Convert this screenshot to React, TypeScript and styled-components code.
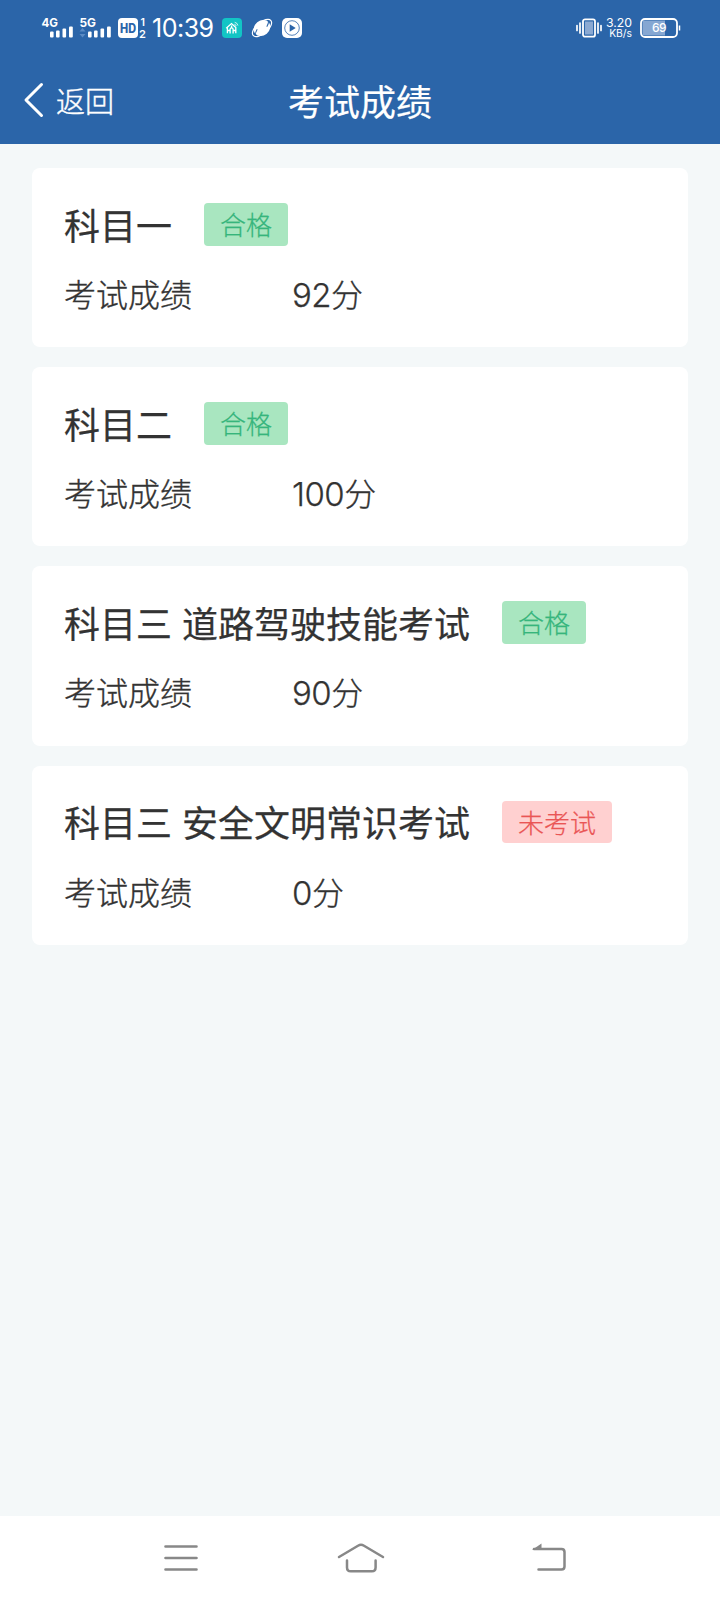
import React from 'react';
import styled, { createGlobalStyle } from 'styled-components';

const GlobalStyle = createGlobalStyle`
  * { box-sizing: border-box; }
  body {
    margin: 0;
    background: #f4f8f9;
    font-family: 'Noto Sans CJK SC', sans-serif;
    color: #333;
  }
`;

const Screen = styled.div`
  display: flex;
  flex-direction: column;
  width: 720px;
  height: 1600px;
  background: #f4f8f9;
`;

const StatusBar = styled.div`
  display: flex;
  align-items: center;
  justify-content: space-between;
  height: 56px;
  padding: 0 39px 0 41px;
  background: #2b65a9;
  color: #fff;
  font-family: Inter, sans-serif;
`;

const StatusGroup = styled.div`
  display: flex;
  align-items: center;
`;

const Clock = styled.span`
  width: 63px;
  margin: 0 7px 0 6px;
  font-size: 25px;
  line-height: 30px;
  letter-spacing: -0.5px;
  white-space: nowrap;
`;

const StatusIcon = styled.svg<{ $gap?: number }>`
  display: block;
  flex: none;
  margin-left: ${({ $gap = 0 }) => $gap}px;
  overflow: visible;
`;

const NetSpeed = styled.div`
  display: flex;
  flex-direction: column;
  align-items: flex-end;
  width: 26px;
  margin: 0 8px 0 4px;
`;

const SpeedText = styled.span<{ $size: number }>`
  font-size: ${({ $size }) => $size}px;
  line-height: 11px;
  white-space: nowrap;
`;

const NavBar = styled.header`
  display: grid;
  grid-template-columns: 1fr auto 1fr;
  align-items: center;
  height: 88px;
  padding: 0 24px;
  background: #2b65a9;
  color: #fff;
`;

const BackButton = styled.div`
  display: flex;
  align-items: center;
  gap: 12px;
  font-size: 29px;
  font-weight: 300;
  line-height: 40px;
`;

const BackLabel = styled.span`
  -webkit-text-stroke: 0.4px currentColor;
`;

const PageTitle = styled.h1`
  margin: 0;
  font-size: 36px;
  line-height: 48px;
  font-weight: 400;
  -webkit-text-stroke: 0.2px #fff;
`;

const ScoreList = styled.main`
  flex: 1;
  display: flex;
  flex-direction: column;
  gap: 20px;
  padding: 24px 32px;
`;

const Card = styled.section`
  height: 179.2px;
  padding: 34.8px 32px 0;
  border-radius: 8px;
  background: #fff;
`;

const CardHead = styled.div`
  display: flex;
  align-items: center;
  gap: 32px;
  height: 43px;
`;

const Subject = styled.h2`
  margin: 0;
  font-size: 36px;
  line-height: 43px;
  font-weight: 400;
  word-spacing: 2px;
  white-space: nowrap;
  -webkit-text-stroke: 0.25px #333;
`;

const Tag = styled.span<{ $passed: boolean }>`
  height: 42.5px;
  padding: 0 16px;
  border-radius: 4px;
  font-size: 26px;
  font-weight: 300;
  line-height: 42px;
  color: ${({ $passed }) => ($passed ? '#36b57c' : '#ea5555')};
  background: ${({ $passed }) => ($passed ? '#a9e6c0' : '#ffd0d0')};
  -webkit-text-stroke: 0.25px currentColor;
`;

const ScoreRow = styled.div`
  display: flex;
  align-items: baseline;
  margin-top: 25.2px;
  font-size: 32px;
  font-weight: 300;
  line-height: 44px;
`;

const ScoreLabel = styled.span`
  width: 228px;
  -webkit-text-stroke: 0.35px currentColor;
`;

const ScoreUnit = styled.span`
  -webkit-text-stroke: 0.35px currentColor;
`;

const ScoreNumber = styled.span`
  font-family: Inter, sans-serif;
  font-size: 33px;
  letter-spacing: -0.5px;
  -webkit-text-stroke: 0.25px currentColor;
`;

const SystemNav = styled.nav`
  display: grid;
  grid-template-columns: repeat(3, 1fr);
  justify-items: center;
  align-items: center;
  height: 84px;
  padding: 0 84px 0 86px;
  background: #fff;
`;

const scores = [
  { subject: '科目一', status: '合格', passed: true, score: 92 },
  { subject: '科目二', status: '合格', passed: true, score: 100 },
  { subject: '科目三 道路驾驶技能考试', status: '合格', passed: true, score: 90 },
  { subject: '科目三 安全文明常识考试', status: '未考试', passed: false, score: 0 },
];

function Signal({ label, data, gap }: { label: string; data?: boolean; gap?: number }) {
  return (
    <StatusIcon $gap={gap} width="33" height="24" viewBox="0 0 33 24" fill="#fff">
      <text x="0.5" y="10.5" fontSize="12" fontWeight="700" textLength="16.5" lengthAdjust="spacingAndGlyphs">{label}</text>
      {data && <path d="M0.5 15.5 3.5 12l3 3.5zM0.5 18l3 3.5 3-3.5z" fill="#5b8bc4" />}
      <rect x="9" y="15.5" width="3.6" height="6" rx="1" />
      <rect x="15" y="14.5" width="3.6" height="7" rx="1" />
      <rect x="21.5" y="12.5" width="3.6" height="9" rx="1" />
      <rect x="28" y="10.5" width="3.8" height="11" rx="1" />
    </StatusIcon>
  );
}

export default function App() {
  return (
    <Screen>
      <GlobalStyle />
      <StatusBar>
        <StatusGroup>
          <Signal label="4G" />
          <Signal label="5G" data gap={5} />
          <StatusIcon $gap={6} width="28" height="24" viewBox="0 0 28 24" fill="#fff">
            <rect x="0" y="2" width="20" height="20" rx="4" />
            <text x="2" y="16.5" fontSize="12.5" fontWeight="800" fill="#2b65a9" textLength="16" lengthAdjust="spacingAndGlyphs">HD</text>
            <text x="22.5" y="10" fontSize="10.5" fontWeight="600">1</text>
            <text x="21" y="21.5" fontSize="11" fontWeight="600">2</text>
          </StatusIcon>
          <Clock>10:39</Clock>
          <StatusIcon width="20" height="20" viewBox="0 0 20 20" fill="none">
            <rect width="20" height="20" rx="4" fill="#12c5c5" />
            <path d="M4.2 10.2 9.5 5.5l4.6 4.2M5.4 9.5v5.8M13.8 9.5v5.8M8.1 15.5v-4.2a1.5 1.5 0 0 1 3 0v4.2M5.6 12.5h2M11.5 12.5h2M9.6 7.5v2" stroke="#fff" strokeWidth="1.3" />
            <path d="M12.4 6.3a2 2 0 0 1 1.8 1.8M12.7 4.3a4 4 0 0 1 3.2 3.2" stroke="#fff" strokeWidth="0.8" />
          </StatusIcon>
          <StatusIcon $gap={10} width="20" height="20" viewBox="0 0 20 20">
            <g transform="rotate(-40 10 10)">
              <ellipse cx="10" cy="10" rx="11.6" ry="5.6" fill="none" stroke="#fff" strokeWidth="1.2" />
              <ellipse cx="10" cy="10" rx="8.8" ry="7.4" fill="#fff" />
              <path d="M20 8.4q-2 2.6-5.5 3.700M0 11.6q2-2.600 5.500-3.700" fill="none" stroke="#2b65a9" strokeWidth="1" />
            </g>
          </StatusIcon>
          <StatusIcon $gap={10} width="20" height="20" viewBox="0 0 20 20" fill="none">
            <rect width="20" height="20" rx="5" fill="#fff" />
            <circle cx="10" cy="10" r="7.3" stroke="#2b65a9" strokeWidth="0.8" />
            <path d="M7.7 6.2v7.6l6-3.8z" fill="#2b65a9" />
          </StatusIcon>
        </StatusGroup>
        <StatusGroup>
          <StatusIcon width="26" height="20" viewBox="0 0 26 20" fill="none" stroke="#fff">
            <rect x="7" y="1.3" width="12" height="17.4" rx="2" strokeWidth="1.8" />
            <rect x="9" y="3.5" width="8" height="13" fill="#8ba9d2" stroke="none" />
            <path d="M4 5v10M22 5v10M1 7.5v5M25 7.5v5" strokeWidth="1.7" strokeLinecap="round" />
          </StatusIcon>
          <NetSpeed>
            <SpeedText $size={12.3}>3.20</SpeedText>
            <SpeedText $size={10.3}>KB/s</SpeedText>
          </NetSpeed>
          <StatusIcon width="41" height="20" viewBox="0 0 41 20" fill="none">
            <rect x="2.5" y="2.5" width="22.5" height="15" fill="#86a7d2" />
            <rect x="1" y="1" width="36" height="18" rx="4" stroke="#fff" strokeWidth="1.8" />
            <path d="M39.5 7.5v5" stroke="#fff" strokeWidth="1.5" />
            <text x="19" y="14.3" fontSize="12" fontWeight="500" fill="#fff" textAnchor="middle" letterSpacing="-0.5">69</text>
          </StatusIcon>
        </StatusGroup>
      </StatusBar>
      <NavBar>
        <BackButton>
          <StatusIcon width="20" height="34" viewBox="0 0 20 34" fill="none" stroke="#fff" strokeWidth="3" strokeLinecap="round" strokeLinejoin="round">
            <path d="M17.5 1.5 2 17l15.5 15.5" />
          </StatusIcon>
          <BackLabel>返回</BackLabel>
        </BackButton>
        <PageTitle>考试成绩</PageTitle>
      </NavBar>
      <ScoreList>
        {scores.map((s) => (
          <Card key={s.subject}>
            <CardHead>
              <Subject>{s.subject}</Subject>
              <Tag $passed={s.passed}>{s.status}</Tag>
            </CardHead>
            <ScoreRow>
              <ScoreLabel>考试成绩</ScoreLabel>
              <ScoreNumber>{s.score}</ScoreNumber>
              <ScoreUnit>分</ScoreUnit>
            </ScoreRow>
          </Card>
        ))}
      </ScoreList>
      <SystemNav>
        <StatusIcon $gap={6} width="34" height="28" viewBox="0 0 34 28" stroke="#888" strokeWidth="2.6" strokeLinecap="round">
          <path d="M1.5 2.5h31M1.5 14h31M1.5 25.5h31" />
        </StatusIcon>
        <StatusIcon width="48" height="30" viewBox="0 0 48 30" fill="none" stroke="#888" strokeWidth="2.5" strokeLinecap="round">
          <path d="M2 14 21 2.7q3-1.8 6 0L46 14M10 17.5v7q0 3.8 3.8 3.8h21q3.8 0 3.8-3.8v-7" />
        </StatusIcon>
        <StatusIcon $gap={10} width="34" height="28" viewBox="0 0 34 28" fill="none" stroke="#888" strokeWidth="2.5" strokeLinecap="round">
          <path d="M2 5h27.5q3 0 3 3v14.5q0 3-3 3h-23" />
          <path d="M0 6 9.5 -0.500v6.500z" fill="#888" stroke="none" />
        </StatusIcon>
      </SystemNav>
    </Screen>
  );
}
